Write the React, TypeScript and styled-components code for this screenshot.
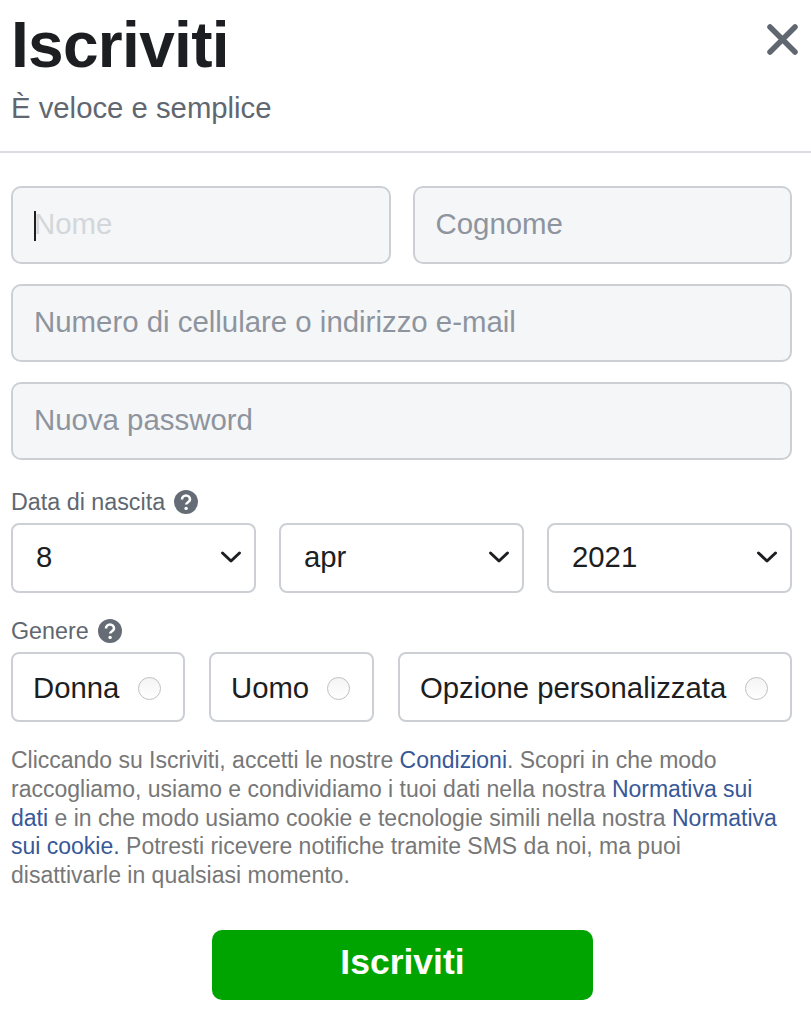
import React from "react";
import styled, { createGlobalStyle } from "styled-components";

const Global = createGlobalStyle`
  html, body { margin: 0; padding: 0; background: #fff; }
  body { font-family: "Liberation Sans", Arial, sans-serif; }
`;
const Page = styled.div`width: 811px; height: 1024px; overflow: hidden; background: #fff;`;
const Header = styled.header`
  position: relative; height: 153px; padding: 12px 11px 0; box-sizing: border-box;
  border-bottom: 2px solid #dadde1;
`;
const Title = styled.h1`margin: 0; font-size: 64px; line-height: 66px; font-weight: 700; color: #1c1e21; letter-spacing: -0.7px;`;
const Subtitle = styled.div`margin-top: 13px; font-size: 29.3px; line-height: 34px; color: #606770;`;
const Close = styled.button`position: absolute; top: 24px; right: 13px; padding: 0; border: 0; background: none; width: 31px; height: 31px;`;
const Form = styled.form`display: flex; flex-direction: column; padding: 33px 19px 0 11px;`;
const Row = styled.div`display: flex; gap: 22px; margin-bottom: 20px;`;
const Field = styled.div`
  flex: 1; position: relative; height: 78px; box-sizing: border-box; padding: 0 21px 2px; display: flex; align-items: center;
  background: #f5f6f7; border: 2px solid #ccd0d5; border-radius: 10px;
  font-size: 29.4px; color: #8d949e;
`;
const Caret = styled.span`position: absolute; left: 21px; top: 23px; width: 2px; height: 30px; background: #1c1e21;`;
const Faded = styled.span`color: #d3d6da;`;
const Label = styled.div`display: flex; align-items: center; gap: 9px; height: 24px; font-size: 23.3px; color: #606770; margin-top: 10px;`;
const Selects = styled.div`display: flex; justify-content: space-between; margin: 9px 0 16px;`;
const SelectBox = styled.div`
  width: 245px; height: 70px; box-sizing: border-box; padding: 0 12px 2px 23px; display: flex; align-items: center; justify-content: space-between;
  border: 2px solid #ccd0d5; border-radius: 8px; font-size: 29.3px; color: #1c1e21;
`;
const Radios = styled.div`display: flex; gap: 24px; margin-top: 9px;`;
const RadioBox = styled.div<{ $w: number }>`
  width: ${(p) => p.$w}px; height: 70px; box-sizing: border-box; padding: 2px 22px 0 20px; display: flex; align-items: center; justify-content: space-between;
  border: 2px solid #ccd0d5; border-radius: 8px; font-size: 29.3px; color: #1c1e21;
`;
const Dot = styled.span`
  width: 23px; height: 23px; box-sizing: border-box; border: 1px solid #bcc0c4; border-radius: 50%;
  background: linear-gradient(#f4f4f4, #ffffff); flex: none;
`;
const Legal = styled.p`margin: 24px 0 0; font-size: 23px; line-height: 28.8px; color: #777; width: 781px;`;
const A = styled.a`color: #385898;`;
const Center = styled.div`display: flex; justify-content: center; margin-top: 40px; padding-left: 2px;`;
const Submit = styled.button`
  width: 381px; height: 70px; padding: 0 0 4px; border: 0; border-radius: 10px; background: #00a400; color: #fff;
  font: 700 35.5px "Liberation Sans", Arial, sans-serif;
`;
const Chevron = () => (
  <svg width="22" height="14" viewBox="0 0 22 14" fill="none" stroke="#1c1e21" strokeWidth="3" strokeLinecap="round" strokeLinejoin="round"><path d="M2.5 3l8.5 8 8.5-8" /></svg>
);
const Help = () => (
  <svg width="24" height="24" viewBox="0 0 24 24">
    <circle cx="12" cy="12" r="12" fill="#666c75" />
    <path d="M8 9.5a4 4 0 0 1 8 0c0 2.6-3.8 2.8-3.8 5" fill="none" stroke="#fff" strokeWidth="2.6" />
    <circle cx="12.1" cy="18.4" r="1.7" fill="#fff" />
  </svg>
);
export default function App() {
  return (
    <Page>
      <Global />
      <Header>
        <Title>Iscriviti</Title>
        <Subtitle>È veloce e semplice</Subtitle>
        <Close aria-label="Chiudi">
          <svg width="31" height="31" viewBox="0 0 31 31" stroke="#606770" strokeWidth="5.5" strokeLinecap="round"><path d="M3 3l25 25M28 3L3 28" /></svg>
        </Close>
      </Header>
      <Form>
        <Row>
          <Field><Caret /><Faded>Nome</Faded></Field>
          <Field>Cognome</Field>
        </Row>
        <Row><Field>Numero di cellulare o indirizzo e-mail</Field></Row>
        <Row><Field>Nuova password</Field></Row>
        <Label>Data di nascita <Help /></Label>
        <Selects>
          <SelectBox>8<Chevron /></SelectBox>
          <SelectBox>apr<Chevron /></SelectBox>
          <SelectBox>2021<Chevron /></SelectBox>
        </Selects>
        <Label>Genere <Help /></Label>
        <Radios>
          <RadioBox $w={174}>Donna<Dot /></RadioBox>
          <RadioBox $w={165}>Uomo<Dot /></RadioBox>
          <RadioBox $w={394}>Opzione personalizzata<Dot /></RadioBox>
        </Radios>
        <Legal>
          Cliccando su Iscriviti, accetti le nostre <A>Condizioni</A>. Scopri in che modo raccogliamo, usiamo e condividiamo i tuoi dati nella nostra <A>Normativa sui dati</A> e in che modo usiamo cookie e tecnologie simili nella nostra <A>Normativa sui cookie.</A> Potresti ricevere notifiche tramite SMS da noi, ma puoi disattivarle in qualsiasi momento.
        </Legal>
        <Center><Submit>Iscriviti</Submit></Center>
      </Form>
    </Page>
  );
}
